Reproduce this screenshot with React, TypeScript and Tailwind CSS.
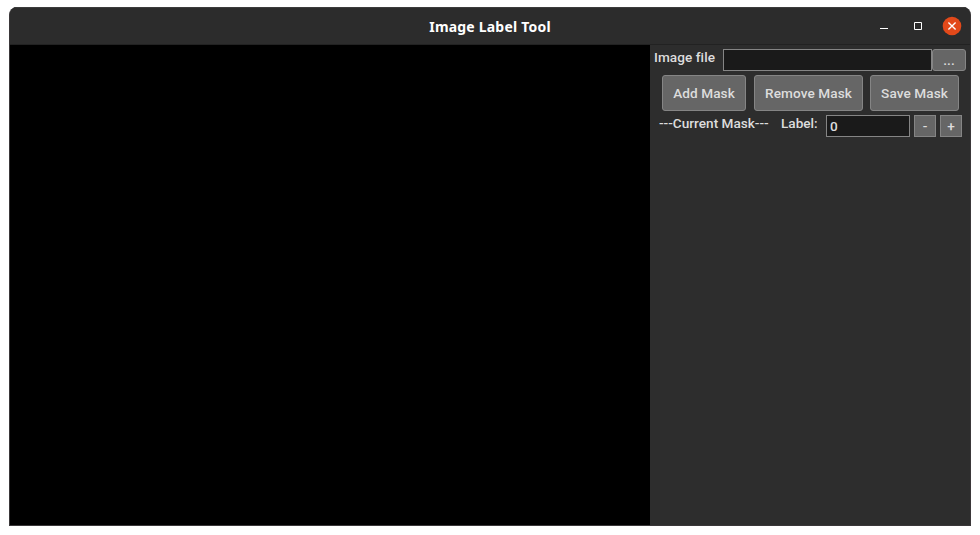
import React from 'react';

function MaskButton({ label, className }: { label: string; className: string }) {
  return (
    <button
      className={`h-9 shrink-0 whitespace-nowrap rounded-[3px] border border-[#858585] bg-[#666666] text-center tracking-[0.08px] ${className}`}
    >
      {label}
    </button>
  );
}

function StepButton({ label }: { label: string }) {
  return (
    <button className="flex h-[22px] w-[22px] shrink-0 items-center justify-center border border-[#858585] bg-[#666666] pt-0.5 leading-none">
      {label}
    </button>
  );
}

function TitleBar() {
  return (
    <header className="flex h-[38px] shrink-0 items-center border-b border-[#222222] border-t border-t-[#3c3c3c] bg-[#2c2c2c]">
      <div className="w-[98px]" />
      <h1 className="flex-1 whitespace-nowrap pt-px text-center font-['Noto_Sans','Open_Sans',sans-serif] text-[14px] leading-5 font-bold tracking-[0.2px] text-white">
        Image Label Tool
      </h1>
      <div className="flex w-[98px] items-center pb-px pl-[6px]">
        <svg width="12" height="12" viewBox="0 0 12 12" aria-label="Minimize">
          <path d="M2 8.5h8" stroke="#fff" />
        </svg>
        <svg className="ml-[22px]" width="12" height="12" viewBox="0 0 12 12" aria-label="Maximize">
          <path d="M2.5 2.5h7v7h-7z" fill="none" stroke="#fff" />
        </svg>
        <svg className="ml-[18px]" width="20" height="20" viewBox="0 0 20 20" aria-label="Close">
          <circle cx="10" cy="10" r="9.3" fill="#e2491a" />
          <path d="M6.4 6.4l7.2 7.2M13.6 6.4l-7.2 7.2" stroke="#fff" strokeWidth="1.35" />
        </svg>
      </div>
    </header>
  );
}

export default function App() {
  return (
    <div className="h-[535px] w-[980px] bg-white pt-[7px] pl-[9px] font-['Roboto',sans-serif] text-[13.6px] font-medium text-[#dddddd]">
      <div className="flex h-[519px] w-[962px] flex-col overflow-hidden rounded-t-[8px] border border-t-0 border-[#3a3739] bg-[#2d2d2d]">
        <TitleBar />
        <main className="flex min-h-0 flex-1">
          <section className="w-[640px] shrink-0 bg-black" />
          <aside className="flex w-[320px] flex-col gap-1 pt-1">
            <div className="flex h-[22px] pl-1">
              <label className="w-[69px] shrink-0 whitespace-nowrap leading-[17px] tracking-[0.06px]">Image file</label>
              <input className="h-[22px] w-[209px] shrink-0 border border-[#858585] bg-[#1a1a1a] px-1 outline-none" />
              <button className="h-[22px] w-[34px] shrink-0 rounded-[3px] border border-[#858585] bg-[#666666] leading-5">
                ...
              </button>
            </div>
            <div className="flex pl-3">
              <MaskButton label="Add Mask" className="w-[84px]" />
              <MaskButton label="Remove Mask" className="ml-2 w-[109px]" />
              <MaskButton label="Save Mask" className="ml-[7px] w-[89px]" />
            </div>
            <div className="flex h-[22px] pl-[9px]">
              <span className="w-[122px] shrink-0 whitespace-nowrap leading-[17px]">---Current Mask---</span>
              <label className="w-[45px] shrink-0 whitespace-nowrap leading-[17px]">Label:</label>
              <input
                className="mr-1 h-[22px] w-[84px] shrink-0 border border-[#858585] bg-[#1a1a1a] px-[3px] outline-none"
                defaultValue="0"
              />
              <StepButton label="-" />
              <div className="w-1" />
              <StepButton label="+" />
            </div>
          </aside>
        </main>
      </div>
    </div>
  );
}
